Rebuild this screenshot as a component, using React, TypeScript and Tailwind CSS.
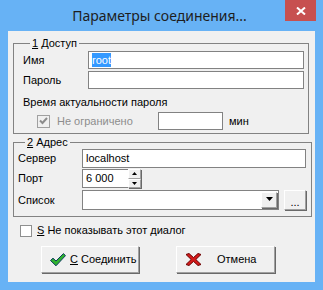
import React from 'react';

const raised =
  'border border-t-white border-l-white border-r-[#a0a0a0] border-b-[#a0a0a0] shadow-[1px_1px_0_#696969] bg-[#f0f0f0]';

function TextBox({ className = '', children }: { className?: string; children?: React.ReactNode }) {
  return (
    <div className={`bg-white border border-[#828282] flex items-center pl-[3px] ${className}`}>
      {children}
    </div>
  );
}

function CheckIcon() {
  return (
    <svg width="16" height="14" viewBox="0 0 16 14">
      <path
        d="M0.5 7.5 L3 5.2 L6 8 L13.4 0.6 L15.5 2.6 L6 12.8 Z"
        fill="#2fb12f"
        stroke="#0d3a5e"
        strokeWidth="1"
        strokeLinejoin="round"
      />
    </svg>
  );
}

function CrossIcon() {
  return (
    <svg width="17" height="13" viewBox="0 0 17 13">
      <path
        d="M1 1.5 L4 0.5 L8.5 4.6 L13 0.5 L16 1.5 L10.8 6.5 L16 11.5 L13 12.5 L8.5 8.4 L4 12.5 L1 11.5 L6.2 6.5 Z"
        fill="#d41a1a"
        stroke="#6b0000"
        strokeWidth="1"
        strokeLinejoin="round"
      />
    </svg>
  );
}

export default function App() {
  return (
    <div className="w-[323px] h-[290px] bg-[#67b2f5] flex flex-col font-['Liberation_Sans',Arial,sans-serif] text-[11px] text-black select-none whitespace-nowrap">
      {/* Title bar */}
      <div className="relative h-[31px] flex items-center justify-center">
        <span className="font-['Noto_Sans',sans-serif] text-[14px] text-[#1e1e1e] mt-[-1px] ml-[-4px]">
          Параметры соединения...
        </span>
        <div className="absolute top-0 right-[7px] w-[31px] h-[21px] bg-[#c75050] flex items-center justify-center">
          <svg width="10" height="8" viewBox="0 0 10 8">
            <path d="M1 0.5 L9 7.5 M9 0.5 L1 7.5" stroke="white" strokeWidth="2" />
          </svg>
        </div>
      </div>

      {/* Client area */}
      <div className="mx-[8px] mb-[8px] flex-1 bg-[#f0f0f0] pl-[5px] pr-[6px] flex flex-col">
        {/* 1 Доступ */}
        <fieldset className="mt-[4px] border border-[#828282] pl-[9px] pr-[4px] pb-[3px]">
          <legend className="ml-[7px] px-[2px] leading-[16px]">
            <span className="underline">1</span> Доступ
          </legend>
          <div className="flex items-center h-[18px]">
            <span className="w-[65px]">Имя</span>
            <TextBox className="flex-1 h-[18px]">
              <span className="bg-[#3399ff] text-white leading-[14px]">root</span>
            </TextBox>
          </div>
          <div className="flex items-center h-[18px] mt-[2px]">
            <span className="w-[65px]">Пароль</span>
            <TextBox className="flex-1 h-[18px]" />
          </div>
          <div className="mt-[5px] h-[16px] leading-[16px]">Время актуальности пароля</div>
          <div className="flex items-center h-[18px] mt-[2px]">
            <div className="shrink-0 ml-[14px] w-[13px] h-[13px] border border-[#a0a0a0] bg-[#f0f0f0] flex items-center justify-center">
              <svg width="9" height="8" viewBox="0 0 9 8">
                <path d="M1 3.5 L3.5 6 L8 1" stroke="#8c8c8c" strokeWidth="2" fill="none" />
              </svg>
            </div>
            <span className="shrink-0 ml-[7px] w-[101px] text-[#8d8d8d]">Не ограничено</span>
            <TextBox className="shrink-0 w-[65px] h-[18px]" />
            <span className="ml-[6px]">мин</span>
          </div>
        </fieldset>

        {/* 2 Адрес */}
        <fieldset className="mt-[1px] border border-[#828282] pl-[4px] pr-[5px] pb-[6px]">
          <legend className="ml-[7px] px-[2px] leading-[14px]">
            <span className="underline">2</span> Адрес
          </legend>
          <div className="flex items-center h-[19px]">
            <span className="w-[64px]">Сервер</span>
            <TextBox className="flex-1 h-[19px]">localhost</TextBox>
          </div>
          <div className="flex items-center h-[19px] mt-[1px]">
            <span className="w-[64px]">Порт</span>
            <TextBox className="w-[47px] h-[19px]">6 000</TextBox>
            <div className="flex flex-col w-[13px] h-[19px] ml-[-1px]">
              <div className={`flex-1 flex items-center justify-center ${raised}`}>
                <svg width="5" height="3" viewBox="0 0 5 3">
                  <path d="M0 3 L2.5 0 L5 3 Z" fill="black" />
                </svg>
              </div>
              <div className={`flex-1 flex items-center justify-center ${raised}`}>
                <svg width="5" height="3" viewBox="0 0 5 3">
                  <path d="M0 0 L5 0 L2.5 3 Z" fill="black" />
                </svg>
              </div>
            </div>
          </div>
          <div className="flex items-center h-[20px] mt-[2px]">
            <span className="w-[64px]">Список</span>
            <div className="w-[197px] h-[20px] bg-white border border-[#828282] flex justify-end items-stretch p-[1px]">
              <div className={`w-[16px] flex items-center justify-center ${raised}`}>
                <svg width="7" height="6" viewBox="0 0 7 6">
                  <path d="M0 0 L7 0 L3.5 4 Z" fill="black" />
                </svg>
              </div>
            </div>
            <div className={`ml-[5px] w-[22px] h-[20px] flex items-end justify-center pb-[3px] leading-[8px] ${raised}`}>
              ...
            </div>
          </div>
        </fieldset>

        {/* Don't show */}
        <div className="mt-[7px] h-[13px] flex items-center">
          <div className="ml-[7px] w-[12px] h-[12px] border border-[#8e8f8f] bg-white" />
          <span className="ml-[5px]">
            <span className="underline">S</span> Не показывать этот диалог
          </span>
        </div>

        {/* Buttons */}
        <div className="mt-[9px] flex">
          <div className={`ml-[28px] w-[98px] h-[27px] flex items-center pl-[8px] ${raised}`}>
            <CheckIcon />
            <span className="ml-[4px]">
              <span className="underline">С</span> Соединить
            </span>
          </div>
          <div className={`ml-[37px] w-[99px] h-[27px] flex items-center pl-[8px] ${raised}`}>
            <CrossIcon />
            <span className="ml-[15px]">Отмена</span>
          </div>
        </div>
      </div>
    </div>
  );
}
